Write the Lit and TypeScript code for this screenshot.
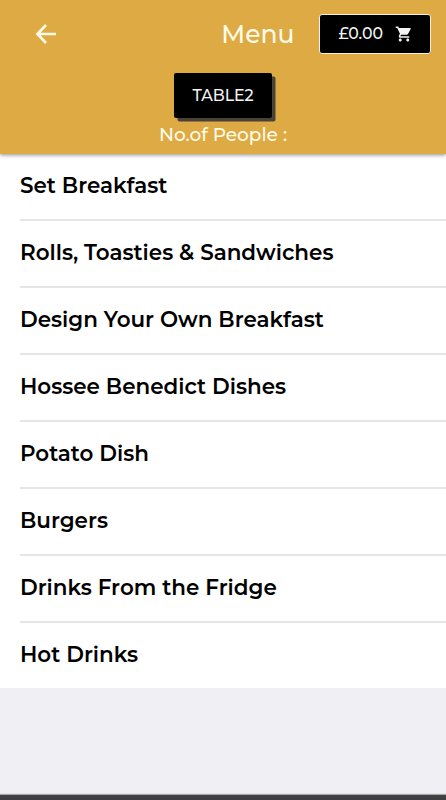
import { LitElement, html, css } from "lit";
import { customElement } from "lit/decorators.js";

const categories = [
  "Set Breakfast",
  "Rolls, Toasties & Sandwiches",
  "Design Your Own Breakfast",
  "Hossee Benedict Dishes",
  "Potato Dish",
  "Burgers",
  "Drinks From the Fridge",
  "Hot Drinks",
];

@customElement("app-root")
export class AppRoot extends LitElement {
  static styles = css`
    :host {
      display: flex;
      flex-direction: column;
      height: 800px;
      overflow: hidden;
      background: #efeff4;
      font-family: Montserrat, Inter, sans-serif;
      color: #000;
    }
    * {
      box-sizing: border-box;
    }
    header {
      flex: none;
      height: 154px;
      background: #deaa43;
      color: #fffbe9;
      box-shadow: 0 1px 4px rgba(0, 0, 0, 0.45);
      z-index: 1;
    }
    .bar {
      display: flex;
      align-items: center;
      height: 67px;
      padding: 0 15px 0 34px;
    }
    button {
      font: inherit;
      border: 0;
      padding: 0;
      color: inherit;
      background: none;
    }
    .back {
      display: flex;
    }
    .title {
      margin: 0 24.5px 0 auto;
      font-size: 25px;
      line-height: 32px;
      font-weight: 500;
    }
    .cart {
      display: flex;
      align-items: center;
      justify-content: space-between;
      width: 112px;
      height: 40px;
      margin-top: 1px;
      padding: 0 17.5px 0 18.5px;
      border: 1.5px solid #f8efdc;
      border-radius: 3px;
      background: #000;
      color: #f4f4f4;
      font-size: 15.8px;
      line-height: 20px;
      font-weight: 500;
    }
    .seating {
      display: flex;
      flex-direction: column;
      align-items: center;
      padding-top: 6px;
    }
    .table {
      width: 98px;
      height: 45px;
      padding-bottom: 1px;
      border-radius: 2px;
      background: #000;
      color: #f4f4f4;
      box-shadow: 3.5px 3.5px 0 #48423a;
      font-size: 15.8px;
      font-weight: 500;
    }
    .people {
      margin-top: 6px;
      font-size: 18.5px;
      line-height: 22px;
      font-weight: 500;
    }
    ul {
      flex: none;
      height: 534px;
      margin: 0;
      padding: 0 0 0 20px;
      list-style: none;
      background: #fff;
    }
    li {
      height: 66.95px;
      padding-top: 17.4px;
      border-bottom: 2px solid #e5e5e5;
      font-size: 21.44px;
      font-weight: 600;
      line-height: 28px;
      white-space: nowrap;
    }
    li:last-child {
      border: 0;
      height: 65px;
    }
    footer {
      margin-top: auto;
      height: 5px;
      background: #404042;
      box-shadow: 0 -1px 1px #a8a8ae;
    }
  `;

  render() {
    return html`
      <header>
        <div class="bar">
          <button class="back" aria-label="Back">
            <svg width="24" height="24" viewBox="0 0 24 24" fill="none" stroke="currentColor" stroke-width="2.6">
              <path d="M22 12H4M12 3 3.4 12l8.6 9" />
            </svg>
          </button>
          <h1 class="title">Menu</h1>
          <button class="cart">
            <span>£0.00</span>
            <svg width="18" height="18" viewBox="0 0 24 24" fill="currentColor">
              <path d="M7 18c-1.1 0-1.99.9-1.99 2S5.9 22 7 22s2-.9 2-2-.9-2-2-2zM1 2v2h2l3.6 7.59-1.35 2.45c-.16.28-.25.61-.25.96 0 1.1.9 2 2 2h12v-2H7.42c-.14 0-.25-.11-.25-.25l.03-.12.9-1.63h7.45c.75 0 1.41-.41 1.75-1.03l3.58-6.49c.08-.14.12-.31.12-.48 0-.55-.45-1-1-1H5.21l-.94-2H1zm16 16c-1.1 0-1.99.9-1.99 2s.89 2 1.99 2 2-.9 2-2-.9-2-2-2z" />
            </svg>
          </button>
        </div>
        <div class="seating">
          <button class="table">TABLE2</button>
          <div class="people">No.of People :</div>
        </div>
      </header>
      <ul>
        ${categories.map((name) => html`<li>${name}</li>`)}
      </ul>
      <footer></footer>
    `;
  }
}
